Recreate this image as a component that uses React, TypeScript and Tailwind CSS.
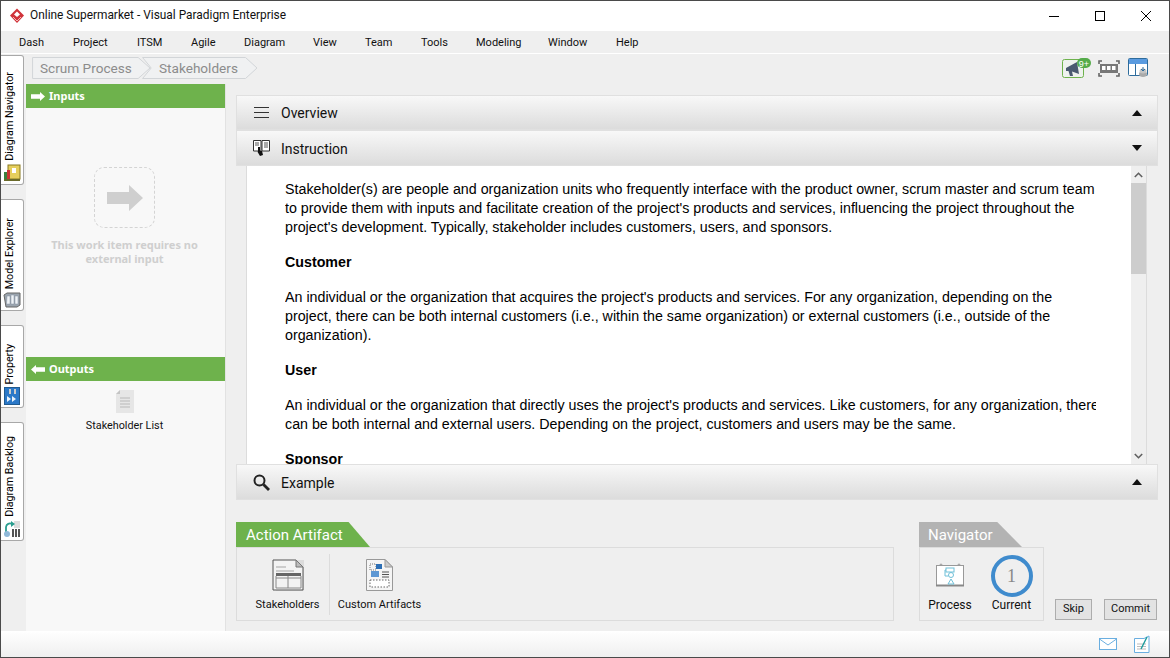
import { FC, ReactNode } from "react";

const ui = "font-['Roboto',sans-serif]";
const boldUi = "font-['Noto_Sans',sans-serif] font-bold";

const menuItems = [
  { label: "Dash", width: "w-[54px]" },
  { label: "Project", width: "w-[64px]" },
  { label: "ITSM", width: "w-[54px]" },
  { label: "Agile", width: "w-[53px]" },
  { label: "Diagram", width: "w-[69px]" },
  { label: "View", width: "w-[52px]" },
  { label: "Team", width: "w-[56px]" },
  { label: "Tools", width: "w-[55px]" },
  { label: "Modeling", width: "w-[72px]" },
  { label: "Window", width: "w-[68px]" },
  { label: "Help", width: "w-[40px]" },
];

const LogoIcon = () => (
  <svg width="16" height="16" viewBox="0 0 16 16">
    <path d="M8 0.5 15 7.5 8 15 1 7.5Z" fill="#d0333a" />
    <path d="M8 3.5 11 6.5 8 9 5 6.5Z" fill="#fff" />
    <path d="M4 9 8 13 12 9" fill="none" stroke="#f4b5b5" strokeWidth="1" />
  </svg>
);

const MegaphoneIcon = () => (
  <svg width="30" height="21" viewBox="0 0 30 21">
    <rect x="0.5" y="1.5" width="21" height="18" rx="2" fill="#eef2ee" stroke="#6eb24c" />
    <path d="M4 10 15 4 17 16 10 13.5 11 18 8 18 6.5 13 4 13Z" fill="#4a5a70" />
    <rect x="15" y="0" width="14" height="10" rx="5" fill="#55ab4a" />
    <text x="22" y="8.5" fontSize="9" fill="#fff" textAnchor="middle" fontFamily="Liberation Sans">9+</text>
  </svg>
);

const FrameIcon = () => (
  <svg width="22" height="17" viewBox="0 0 22 17">
    <path d="M1 4V1H4M18 1H21V4M21 13V16H18M4 16H1V13" fill="none" stroke="#666" strokeWidth="1.6" />
    <rect x="2" y="4" width="18" height="9" fill="#777" />
    <rect x="4" y="6" width="3.5" height="4" fill="#fff" />
    <rect x="9" y="6" width="3.5" height="4" fill="#fff" />
    <rect x="14" y="6" width="3.5" height="4" fill="#fff" />
  </svg>
);

const LayoutIcon = () => (
  <svg width="20" height="20" viewBox="0 0 20 20">
    <rect x="0.5" y="0.5" width="19" height="17" rx="1" fill="#fff" stroke="#2e6c9c" />
    <rect x="1" y="1" width="18" height="5" fill="#5a9be0" />
    <path d="M7.5 6V18" stroke="#2e6c9c" />
    <ellipse cx="15" cy="16" rx="4" ry="3" fill="#aaa" />
    <ellipse cx="15" cy="13" rx="3.5" ry="2.5" fill="#c4c4c4" />
    <path d="M15 9V13M13 11 15 13 17 11" fill="none" stroke="#2e6c9c" />
  </svg>
);

const TabBookIcon = () => (
  <svg width="18" height="18" viewBox="0 0 18 18">
    <rect x="5" y="1" width="12" height="14" fill="#e6cf5c" stroke="#8a7a20" />
    <rect x="9" y="4" width="4" height="5" fill="#fff" />
    <rect x="1" y="8" width="3" height="8" fill="#3d7e3d" />
    <rect x="4" y="6" width="3" height="10" fill="#c33" />
    <path d="M1 16H17" stroke="#6a6a2a" strokeWidth="2" />
  </svg>
);

const TabExplorerIcon = () => (
  <svg width="18" height="16" viewBox="0 0 18 16">
    <path d="M1 3 4 1H17V13L14 15H3Z" fill="#9aa4ae" stroke="#666" />
    <path d="M4 4H7V12H3.5ZM8 3H11V12H8ZM12 4H15V12H12Z" fill="#eef2f6" stroke="#8792a0" strokeWidth=".5" />
  </svg>
);

const TabPropertyIcon = () => (
  <svg width="16" height="18" viewBox="0 0 16 18">
    <rect x="0.5" y="0.5" width="15" height="17" fill="#2a78c8" stroke="#205a90" />
    <rect x="5" y="2" width="2" height="5" fill="#ccc" />
    <rect x="10" y="2" width="2" height="5" fill="#ccc" />
    <path d="M3 9 7 12 3 15ZM8 9 12 12 8 15Z" fill="#e8f2fb" />
  </svg>
);

const TabBacklogIcon = () => (
  <svg width="18" height="18" viewBox="0 0 18 18">
    <rect x="11" y="1" width="6" height="7" fill="#ddd" />
    <path d="M3 14V7A4 4 0 0 1 9 4" fill="none" stroke="#2a9d8f" strokeWidth="1.8" />
    <path d="M8 1 12 4 8 7Z" fill="#2a9d8f" />
    <circle cx="4" cy="14" r="3" fill="#8fb8d8" />
    <rect x="9" y="9" width="2" height="8" fill="#555" />
    <rect x="12" y="9" width="2" height="8" fill="#555" />
    <rect x="15" y="9" width="2" height="8" fill="#555" />
  </svg>
);

const BlockArrow = ({ left = false }: { left?: boolean }) => (
  <svg width="14" height="9" viewBox="0 0 14 9">
    <path d={left ? "M0 4.5 5 0V2.2H14V6.8H5V9Z" : "M14 4.5 9 0V2.2H0V6.8H9V9Z"} fill="#fff" />
  </svg>
);

const DocIcon = () => (
  <svg width="18" height="23" viewBox="0 0 18 23">
    <path d="M4 0H18V23H0V4Z" fill="#e6e6e6" />
    <path d="M4 0V4H0Z" fill="#c4c4c4" />
    <path d="M4 8H14M4 11H14M4 14H14M4 17H14" stroke="#c8c8c8" strokeWidth="1.4" />
  </svg>
);

const BurgerIcon = () => (
  <svg width="15" height="11" viewBox="0 0 15 11">
    <path d="M0 .5H15M0 5.5H15M0 10.5H15" stroke="#333" />
  </svg>
);

const InstructionIcon = () => (
  <svg width="17" height="16" viewBox="0 0 17 16">
    <path d="M.5 .5H8V11H.5ZM9 .5H16.5V11H9Z" fill="#fff" stroke="#333" />
    <path d="M2 3H6M2 5H6M11 3H15M11 5H15M11 7H15" stroke="#555" />
    <path d="M5 7V12L4 11 7 16 10 15 9 11H7V7Z" fill="#111" />
  </svg>
);

const SearchIcon = () => (
  <svg width="17" height="17" viewBox="0 0 17 17">
    <circle cx="6.5" cy="6.5" r="5" fill="none" stroke="#222" strokeWidth="2" />
    <path d="M10.5 10.5 16 16" stroke="#222" strokeWidth="2.8" />
  </svg>
);

const TableDocIcon = () => (
  <svg width="32" height="32" viewBox="0 0 32 32">
    <rect x="4" y="1" width="28" height="31" fill="#dcdcdc" />
    <path d="M1 1H24L31 8V31H1Z" fill="#f3f3f3" stroke="#555" />
    <path d="M24 1V8H31Z" fill="#bbb" stroke="#777" />
    <path d="M4 8H14M4 12H22" stroke="#ccc" strokeWidth="2" />
    <rect x="4" y="14" width="25" height="3" fill="#666" />
    <path d="M4 19H29M16 17V29M4 29H29M4 17V29M29 17V29" fill="none" stroke="#888" />
  </svg>
);

const ArtifactDocIcon = () => (
  <svg width="27" height="32" viewBox="0 0 27 32">
    <path d="M.5 .5H19L26.5 8V31.5H.5Z" fill="#f5f5f5" stroke="#999" />
    <path d="M19 .5V8H26.5Z" fill="#ccc" stroke="#999" />
    <rect x="4" y="5" width="6" height="6" fill="none" stroke="#777" strokeDasharray="1 1" />
    <rect x="10" y="5" width="6" height="5" fill="#2d6fb5" />
    <rect x="5" y="12" width="8" height="6" fill="#5d97d3" />
    <path d="M16 13H23M16 15.5H23M16 18H23" stroke="#555" />
    <rect x="4" y="21" width="19" height="7" fill="#fff" stroke="#666" strokeDasharray="1.5 1.5" />
  </svg>
);

const ProcessIcon = () => (
  <svg width="28" height="24" viewBox="0 0 28 24">
    <circle cx="5" cy="2" r="1.5" fill="#aaa" />
    <circle cx="23" cy="2" r="1.5" fill="#aaa" />
    <rect x=".5" y="2.5" width="27" height="20" fill="#fff" stroke="#999" />
    <path d="M0 22.5H28" stroke="#888" strokeWidth="2" />
    <rect x="10" y="5" width="8" height="4" fill="none" stroke="#6fc0d8" />
    <circle cx="15" cy="12" r="2.5" fill="none" stroke="#6fc0d8" />
    <path d="M12 21 15 16 18 21Z" fill="none" stroke="#6fc0d8" />
    <path d="M10 7H9V13H12.5" fill="none" stroke="#6fc0d8" />
  </svg>
);

const MailIcon = () => (
  <svg width="18" height="12" viewBox="0 0 18 12">
    <rect x=".5" y=".5" width="17" height="11" fill="#fff" stroke="#6aaee0" />
    <path d="M.5 1 9 7 17.5 1" fill="none" stroke="#6aaee0" />
  </svg>
);

const NoteIcon = () => (
  <svg width="16" height="18" viewBox="0 0 16 18">
    <path d="M.5 3.5H10L15 1V17.5H.5Z" fill="#fff" stroke="#6aaee0" />
    <path d="M3 9H12M3 11.5H12M3 14H12" stroke="#bbb" />
    <path d="M7 14 13 2" stroke="#1a9c9c" strokeWidth="1.4" />
  </svg>
);

const Crumb: FC<{ label: string; width: string; first?: boolean }> = ({ label, width, first }) => (
  <div className={`relative h-[22px] flex items-center ${width} ${first ? "" : "-ml-[8px]"}`}>
    <svg className="absolute inset-0 w-full h-full" viewBox="0 0 100 22" preserveAspectRatio="none">
      <path
        d={first ? "M.5 .5H90L100 11 90 21.5H.5Z" : "M.5 .5H90L100 11 90 21.5H.5L8 11Z"}
        fill="#f0f1f2"
        stroke="#d2d5d8"
        vectorEffect="non-scaling-stroke"
      />
    </svg>
    <span className={`relative text-[13.6px] text-[#8c8c8c] whitespace-nowrap ${first ? "pl-[8px]" : "pl-[17px]"}`}>{label}</span>
  </div>
);

const SideTab: FC<{ label: string; height: string; icon: ReactNode }> = ({ label, height, icon }) => (
  <div className={`${height} w-[23px] bg-white border border-l-0 border-[#a8a8a8] rounded-r-[3px] flex flex-col items-center justify-end pb-[2px] gap-[3px]`}>
    <span className="[writing-mode:vertical-rl] rotate-180 text-[10.7px] leading-none text-black whitespace-nowrap mr-[3px]">{label}</span>
    {icon}
  </div>
);

const AccordionRow: FC<{ label: string; icon: ReactNode; height: string; caret: "up" | "down" }> = ({ label, icon, height, caret }) => (
  <div className={`${height} shrink-0 flex items-center border border-[#e0e0e0] bg-gradient-to-b from-[#f8f8f8] to-[#dcdcdc]`}>
    <div className="w-[44px] flex justify-center pl-[4px]">{icon}</div>
    <span className="text-[14px] text-[#111] pt-[2px]">{label}</span>
    <svg className="ml-auto mr-[15px]" width="10" height="6" viewBox="0 0 10 6">
      <path d={caret === "up" ? "M5 0 10 6H0Z" : "M0 0H10L5 6Z"} fill="#111" />
    </svg>
  </div>
);

const Line: FC<{ children: ReactNode }> = ({ children }) => <div className="whitespace-nowrap">{children}</div>;

const InstructionBody = () => (
  <div className="flex-1 min-h-0 flex bg-white ml-[10px] mr-[11px] border-l border-r border-[#dcdcdc]">
    <div className="flex-1 min-w-0 overflow-hidden pl-[38px] pr-[35px] pt-[14px] font-['Liberation_Sans',sans-serif] text-[14.25px] leading-[19px] text-black">
      <div className="w-full overflow-hidden flex flex-col gap-[16px]">
        <div>
          <Line>Stakeholder(s) are people and organization units who frequently interface with the product owner, scrum master and scrum team</Line>
          <Line>to provide them with inputs and facilitate creation of the project's products and services, influencing the project throughout the</Line>
          <Line>project's development. Typically, stakeholder includes customers, users, and sponsors.</Line>
        </div>
        <div className="font-bold">Customer</div>
        <div>
          <Line>An individual or the organization that acquires the project's products and services. For any organization, depending on the</Line>
          <Line>project, there can be both internal customers (i.e., within the same organization) or external customers (i.e., outside of the</Line>
          <Line>organization).</Line>
        </div>
        <div className="font-bold">User</div>
        <div>
          <Line>An individual or the organization that directly uses the project's products and services. Like customers, for any organization, there</Line>
          <Line>can be both internal and external users. Depending on the project, customers and users may be the same.</Line>
        </div>
        <div className="font-bold">Sponsor</div>
      </div>
    </div>
    <div className="w-[15px] shrink-0 bg-[#efefef] flex flex-col items-center relative">
      <svg className="mt-[6px]" width="9" height="6" viewBox="0 0 9 6">
        <path d="M.8 5 4.5 1.3 8.2 5" fill="none" stroke="#606060" strokeWidth="1.6" />
      </svg>
      <div className="mt-[5px] w-full h-[91px] bg-[#cdcdcd]" />
      <svg className="mt-auto mb-[5px]" width="9" height="6" viewBox="0 0 9 6">
        <path d="M.8 1 4.5 4.7 8.2 1" fill="none" stroke="#606060" strokeWidth="1.6" />
      </svg>
    </div>
  </div>
);

const ActionItem: FC<{ label: string; icon: ReactNode; width: string }> = ({ label, icon, width }) => (
  <div className={`${width} flex flex-col items-center pt-[11px]`}>
    <div className="h-[32px] flex items-center">{icon}</div>
    <span className="mt-[6px] text-[11px] leading-[15px] text-[#111] whitespace-nowrap">{label}</span>
  </div>
);

export default function App() {
  return (
    <div className={`${ui} w-[1170px] h-[658px] flex flex-col border border-[#4a4a4a] bg-[#efefef] overflow-hidden`}>
      <div className="h-[30px] shrink-0 bg-white flex items-center pl-[8px]">
        <LogoIcon />
        <span className="ml-[5px] text-[11.9px] text-[#111]">Online Supermarket - Visual Paradigm Enterprise</span>
        <div className="ml-auto flex items-center">
          <div className="w-[46px] flex justify-center">
            <div className="w-[10px] h-px bg-black" />
          </div>
          <div className="w-[46px] flex justify-center">
            <div className="w-[10px] h-[10px] border border-black" />
          </div>
          <div className="w-[46px] flex justify-center">
            <svg width="10" height="10" viewBox="0 0 10 10">
              <path d="M0 0 10 10M10 0 0 10" stroke="#000" />
            </svg>
          </div>
        </div>
      </div>

      <div className="h-[23px] shrink-0 flex items-center pl-[18px] pt-[3px] border-b border-white text-[11px] text-[#111]">
        {menuItems.map((item) => (
          <span key={item.label} className={item.width}>
            {item.label}
          </span>
        ))}
      </div>

      <div className="flex-1 min-h-0 flex">
        <div className="w-[25px] shrink-0 flex flex-col gap-[14px] pt-[1px]">
          <SideTab label="Diagram Navigator" height="h-[130px]" icon={<TabBookIcon />} />
          <SideTab label="Model Explorer" height="h-[112px]" icon={<TabExplorerIcon />} />
          <SideTab label="Property" height="h-[83px]" icon={<TabPropertyIcon />} />
          <SideTab label="Diagram Backlog" height="h-[119px]" icon={<TabBacklogIcon />} />
        </div>

        <div className="flex-1 min-w-0 flex flex-col">
          <div className="h-[30px] shrink-0 flex items-center pl-[6px] pr-[21px] pb-[2px]">
            <Crumb label="Scrum Process" width="w-[118px]" first />
            <Crumb label="Stakeholders" width="w-[115px]" />
            <div className="ml-auto flex items-center">
              <MegaphoneIcon />
              <div className="ml-[6px]">
                <FrameIcon />
              </div>
              <div className="ml-[8px]">
                <LayoutIcon />
              </div>
            </div>
          </div>

          <div className="flex-1 min-h-0 flex">
            <div className="w-[200px] shrink-0 bg-[#f8f8f8] border-r border-[#e2e2e2] flex flex-col">
              <div className="h-[273px] shrink-0 flex flex-col">
                <div className="h-[24px] bg-[#6eb24c] flex items-center pl-[5px] gap-[4px]">
                  <BlockArrow />
                  <span className={`${boldUi} text-[11px] text-white`}>Inputs</span>
                </div>
                <div className="pr-[2px]">
                  <div className="mt-[59px] mx-auto w-[61px] h-[61px] rounded-[10px] border border-dashed border-[#d4d4d4] flex items-center justify-center">
                    <svg width="36" height="26" viewBox="0 0 36 26">
                      <path d="M36 13 22 0V7H0V19H22V26Z" fill="#cfcfcf" />
                    </svg>
                  </div>
                  <div className={`${boldUi} mt-[10px] text-center text-[11px] leading-[14px] text-[#cfcfcf]`}>
                    This work item requires no
                    <br />
                    external input
                  </div>
                </div>
              </div>
              <div className="h-[24px] shrink-0 bg-[#6eb24c] flex items-center pl-[5px] gap-[4px]">
                <BlockArrow left />
                <span className={`${boldUi} text-[11px] text-white`}>Outputs</span>
              </div>
              <div className="flex flex-col items-center pt-[9px] pr-[2px]">
                <DocIcon />
                <span className="mt-[5px] text-[10.8px] leading-[15px] text-[#111]">Stakeholder List</span>
              </div>
            </div>

            <div className="flex-1 min-w-0 flex flex-col pl-[10px] pr-[11px] pt-[11px]">
              <AccordionRow label="Overview" icon={<BurgerIcon />} height="h-[35px]" caret="up" />
              <AccordionRow label="Instruction" icon={<InstructionIcon />} height="h-[36px]" caret="down" />
              <div className="h-[298px] shrink-0 flex flex-col">
                <InstructionBody />
              </div>
              <AccordionRow label="Example" icon={<SearchIcon />} height="h-[36px]" caret="up" />

              <div className="mt-[22px] flex items-start">
                <div className="w-[658px] shrink-0">
                  <div className="w-[134px] h-[25px] bg-[#6eb24c] [clip-path:polygon(0_0,84%_0,100%_100%,0_100%)] pl-[10px] pt-[2px] flex items-center text-[15px] text-white">
                    Action Artifact
                  </div>
                  <div className="h-[74px] border border-[#dcdcdc] flex">
                    <ActionItem label="Stakeholders" icon={<TableDocIcon />} width="w-[92px] pl-[9px]" />
                    <div className="w-px h-[61px] mt-[6px] bg-[#dcdcdc]" />
                    <ActionItem label="Custom Artifacts" icon={<ArtifactDocIcon />} width="w-[99px]" />
                  </div>
                </div>

                <div className="ml-[25px] w-[125px] shrink-0">
                  <div className="w-[103px] h-[25px] bg-[#b3b3b3] [clip-path:polygon(0_0,76%_0,100%_100%,0_100%)] pl-[9px] pt-[2px] flex items-center text-[15px] text-white">
                    Navigator
                  </div>
                  <div className="h-[74px] border border-[#dcdcdc] flex">
                    <div className="w-[60px] flex flex-col items-center pt-[15px]">
                      <ProcessIcon />
                      <span className="mt-[10px] text-[12px] leading-[16px] text-[#111]">Process</span>
                    </div>
                    <div className="flex-1 flex flex-col items-center pt-[7px]">
                      <div className="w-[42px] h-[42px] rounded-full border-[4px] border-[#3f8bcd] flex items-center justify-center font-['Liberation_Serif',serif] text-[18px] text-[#888]">
                        1
                      </div>
                      <span className="mt-[-1px] text-[12px] leading-[16px] text-[#111] pt-[1px]">Current</span>
                    </div>
                  </div>
                </div>

                <div className="ml-[11px] mt-[77px] flex gap-[12px]">
                  <button className="w-[37px] h-[21px] bg-[#e3e3e3] border border-[#adadad] text-[11px] text-[#111]">Skip</button>
                  <button className="w-[53px] h-[21px] bg-[#e3e3e3] border border-[#adadad] text-[11px] text-[#111]">Commit</button>
                </div>
              </div>
            </div>
          </div>
        </div>
      </div>

      <div className="h-[26px] shrink-0 bg-gradient-to-b from-white to-[#efefef] flex items-center justify-end pr-[19px] gap-[17px]">
        <MailIcon />
        <NoteIcon />
      </div>
    </div>
  );
}
